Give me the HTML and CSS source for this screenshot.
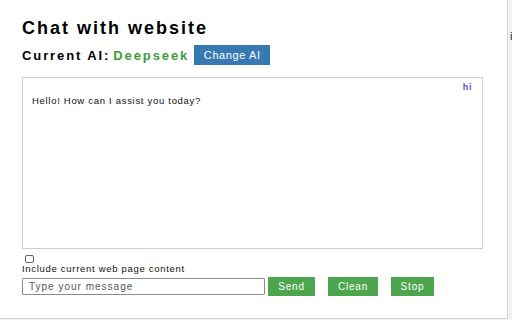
FILE: index.html
```html
<!DOCTYPE html>
<html>
<head>
<meta charset="utf-8">
<link rel="stylesheet" href="styles.css">
</head>
<body>
<div class="backdrop">
  <div class="popup">
    <h1 class="title">Chat with website</h1>
    <div class="ai-row">
      <span class="ai-label">Current AI:</span>
      <span class="ai-name">Deepseek</span>
      <button class="btn-blue">Change AI</button>
    </div>
    <div class="chat">
      <div class="msg-user">hi</div>
      <div class="msg-bot">Hello! How can I assist you today?</div>
    </div>
    <div class="include">
      <input type="checkbox" class="check">
      <label class="include-label">Include current web page content</label>
    </div>
    <div class="input-row">
      <input class="msg-input" type="text" placeholder="Type your message">
      <button class="btn-green send">Send</button>
      <button class="btn-green clean">Clean</button>
      <button class="btn-green stop">Stop</button>
    </div>
  </div>
  <div class="side">
    <span class="side-i">i</span>
  </div>
</div>
</body>
</html>
```
FILE: styles.css
```css
* { box-sizing: border-box; }
html, body { margin: 0; padding: 0; }
body {
  width: 512px;
  height: 320px;
  overflow: hidden;
  background: #f1f1f1;
  font-family: "Liberation Sans", Arial, sans-serif;
}
.backdrop {
  display: flex;
  width: 512px;
  height: 320px;
}
.popup {
  width: 508px;
  height: 319px;
  background: #fff;
  border-right: 1px solid #d4d4d4;
  border-bottom: 1px solid #d4d4d4;
  padding: 18px 0 0 22px;
  flex: none;
}
.side {
  flex: 1;
  position: relative;
}
.side-i {
  position: absolute;
  left: 2px;
  top: 30px;
  font-size: 11px;
  color: #222;
}
.title {
  margin: 0;
  font-size: 18px;
  font-weight: bold;
  color: #000;
  line-height: 20px;
  letter-spacing: 2px;
}
.ai-row {
  display: flex;
  align-items: center;
  margin-top: 7px;
  height: 20px;
}
.ai-label {
  font-size: 13px;
  font-weight: bold;
  color: #000;
  letter-spacing: 1.9px;
}
.ai-name {
  font-size: 13px;
  font-weight: bold;
  color: #3c9c3c;
  margin-left: 3px;
  letter-spacing: 1.9px;
}
.btn-blue {
  margin-left: 5px;
  height: 20px;
  width: 76px;
  border: none;
  background: #3779b3;
  color: #fff;
  font-family: "Liberation Sans", Arial, sans-serif;
  font-size: 11px;
  letter-spacing: 0.6px;
  padding: 0;
}
.chat {
  margin-top: 12px;
  width: 461px;
  height: 172px;
  border: 1px solid #cfcfcf;
  padding: 4px 10px 0 9px;
}
.msg-user {
  text-align: right;
  font-size: 9px;
  font-weight: bold;
  color: #5b4fd6;
  height: 11px;
  line-height: 11px;
  letter-spacing: 0.6px;
}
.msg-bot {
  margin-top: 2px;
  font-size: 9.5px;
  color: #111;
  line-height: 12px;
  letter-spacing: 0.7px;
}
.include {
  margin-top: 6px;
}
.check {
  display: block;
  margin: 0 0 0 3px;
  width: 9px;
  height: 8px;
  appearance: none;
  border: 1px solid #666;
  border-radius: 2px;
  background: #fff;
}
.include-label {
  display: block;
  font-size: 9.5px;
  color: #111;
  line-height: 12px;
  margin-top: 0;
  letter-spacing: 0.7px;
}
.input-row {
  display: flex;
  align-items: center;
  margin-top: 2px;
}
.msg-input {
  width: 243px;
  height: 17px;
  border: 1px solid #8a8a8a;
  border-radius: 1px;
  padding: 0 0 0 6px;
  font-family: "Liberation Sans", Arial, sans-serif;
  font-size: 10px;
  letter-spacing: 1px;
  color: #333;
}
.msg-input::placeholder { color: #555; }
.btn-green {
  height: 19px;
  border: none;
  background: #4da64d;
  color: #fff;
  font-family: "Liberation Sans", Arial, sans-serif;
  font-size: 10px;
  letter-spacing: 0.8px;
  padding: 0;
}
.send { width: 47px; margin-left: 3px; }
.clean { width: 50px; margin-left: 13px; }
.stop { width: 43px; margin-left: 13px; }
```
